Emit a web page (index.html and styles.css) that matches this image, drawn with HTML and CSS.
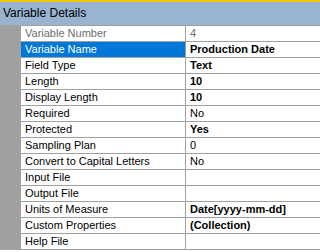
FILE: index.html
```html
<!DOCTYPE html>
<html>
<head>
<meta charset="utf-8">
<link rel="stylesheet" href="styles.css">
</head>
<body>
<div class="panel">
  <div class="header">Variable Details</div>
  <div class="grid">
    <div class="row disabled"><div class="name">Variable Number</div><div class="value">4</div></div>
    <div class="row selected"><div class="name">Variable Name</div><div class="value bold">Production Date</div></div>
    <div class="row"><div class="name">Field Type</div><div class="value bold">Text</div></div>
    <div class="row"><div class="name">Length</div><div class="value bold">10</div></div>
    <div class="row"><div class="name">Display Length</div><div class="value bold">10</div></div>
    <div class="row"><div class="name">Required</div><div class="value">No</div></div>
    <div class="row"><div class="name">Protected</div><div class="value bold">Yes</div></div>
    <div class="row"><div class="name">Sampling Plan</div><div class="value">0</div></div>
    <div class="row"><div class="name">Convert to Capital Letters</div><div class="value">No</div></div>
    <div class="row"><div class="name">Input File</div><div class="value"></div></div>
    <div class="row"><div class="name">Output File</div><div class="value"></div></div>
    <div class="row"><div class="name">Units of Measure</div><div class="value bold">Date[yyyy-mm-dd]</div></div>
    <div class="row"><div class="name">Custom Properties</div><div class="value bold">(Collection)</div></div>
    <div class="row"><div class="name">Help File</div><div class="value"></div></div>
  </div>
</div>
</body>
</html>
```

FILE: styles.css
```css
html, body {
  margin: 0;
  padding: 0;
  background: #ffffff;
}
.panel {
  width: 320px;
  height: 252px;
  overflow: hidden;
  font-family: "Liberation Sans", Arial, sans-serif;
  font-size: 11px;
  color: #000;
  background: #ffffff;
}
.header {
  border-top: 2px solid #f5c400;
  border-bottom: 1px solid #a0a0a0;
  background: #99b4d1;
  height: 23px;
  line-height: 23px;
  padding-left: 3px;
  font-size: 12px;
  color: #000;
}
.grid {
  border-left: 21px solid #a0a0a0;
}
.row {
  display: flex;
  height: 15px;
  border-bottom: 1px solid #a0a0a0;
  line-height: 15px;
}
.name {
  width: 160px;
  padding-left: 4px;
  border-right: 1px solid #a0a0a0;
  white-space: nowrap;
  overflow: hidden;
}
.value {
  flex: 1;
  padding-left: 4px;
  white-space: nowrap;
  overflow: hidden;
}
.bold {
  font-weight: bold;
}
.disabled .name,
.disabled .value {
  color: #6d6d6d;
}
.selected .name {
  background: #0078d7;
  color: #ffffff;
}
```
